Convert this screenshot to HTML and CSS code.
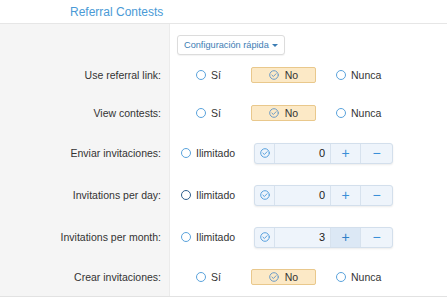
FILE: index.html
```html
<!DOCTYPE html>
<html lang="es">

<head>
    <meta charset="UTF-8">
    <meta name="viewport" content="width=device-width, initial-scale=1.0">
    <title>Referral Contests</title>
    <link rel="stylesheet" href="styles.css">
</head>

<body>
    <!-- Header -->
    <div class="page-head">
        <h2 class="title">Referral Contests</h2>
    </div>

    <div class="form">
        <!-- Quick config -->
        <div class="row row-top">
            <div class="label"></div>
            <div class="field">
                <button class="quick">Configuración rápida <span class="caret"></span></button>
            </div>
        </div>

        <div class="row">
            <div class="label">Use referral link:</div>
            <div class="field choices">
                <label class="opt opt-first"><span class="radio"></span>Sí</label>
                <span class="pick">
                    <svg class="tick" viewBox="0 0 10 10"><circle cx="5" cy="5" r="4.3"/><path d="M2.9 5.1 L4.4 6.5 L7.1 3.7"/></svg>No
                </span>
                <label class="opt"><span class="radio"></span>Nunca</label>
            </div>
        </div>

        <div class="row">
            <div class="label">View contests:</div>
            <div class="field choices">
                <label class="opt opt-first"><span class="radio"></span>Sí</label>
                <span class="pick">
                    <svg class="tick" viewBox="0 0 10 10"><circle cx="5" cy="5" r="4.3"/><path d="M2.9 5.1 L4.4 6.5 L7.1 3.7"/></svg>No
                </span>
                <label class="opt"><span class="radio"></span>Nunca</label>
            </div>
        </div>

        <div class="row row-num">
            <div class="label">Enviar invitaciones:</div>
            <div class="field limits">
                <label class="opt opt-unl"><span class="radio"></span>Ilimitado</label>
                <div class="stepper">
                    <span class="cell cell-check"><svg class="tick" viewBox="0 0 10 10"><circle cx="5" cy="5" r="4.3"/><path d="M2.9 5.1 L4.4 6.5 L7.1 3.7"/></svg></span>
                    <span class="cell cell-value">0</span>
                    <span class="cell cell-btn">+</span>
                    <span class="cell cell-btn">&minus;</span>
                </div>
            </div>
        </div>

        <div class="row row-num">
            <div class="label">Invitations per day:</div>
            <div class="field limits">
                <label class="opt opt-unl"><span class="radio radio-focus"></span>Ilimitado</label>
                <div class="stepper">
                    <span class="cell cell-check"><svg class="tick" viewBox="0 0 10 10"><circle cx="5" cy="5" r="4.3"/><path d="M2.9 5.1 L4.4 6.5 L7.1 3.7"/></svg></span>
                    <span class="cell cell-value">0</span>
                    <span class="cell cell-btn">+</span>
                    <span class="cell cell-btn">&minus;</span>
                </div>
            </div>
        </div>

        <div class="row row-num">
            <div class="label">Invitations per month:</div>
            <div class="field limits">
                <label class="opt opt-unl"><span class="radio"></span>Ilimitado</label>
                <div class="stepper">
                    <span class="cell cell-check"><svg class="tick" viewBox="0 0 10 10"><circle cx="5" cy="5" r="4.3"/><path d="M2.9 5.1 L4.4 6.5 L7.1 3.7"/></svg></span>
                    <span class="cell cell-value">3</span>
                    <span class="cell cell-btn cell-hover">+</span>
                    <span class="cell cell-btn">&minus;</span>
                </div>
            </div>
        </div>

        <div class="row">
            <div class="label">Crear invitaciones:</div>
            <div class="field choices">
                <label class="opt opt-first"><span class="radio"></span>Sí</label>
                <span class="pick">
                    <svg class="tick" viewBox="0 0 10 10"><circle cx="5" cy="5" r="4.3"/><path d="M2.9 5.1 L4.4 6.5 L7.1 3.7"/></svg>No
                </span>
                <label class="opt"><span class="radio"></span>Nunca</label>
            </div>
        </div>
    </div>
</body>

</html>
```

FILE: styles.css
```css
* {
    margin: 0;
    padding: 0;
    box-sizing: border-box;
}

body {
    background: #ffffff;
    color: #333333;
    font-family: "Liberation Sans", Arial, sans-serif;
    font-size: 10.5px;
    overflow: hidden;
}

.page-head {
    height: 24px;
    border-bottom: 1px solid #e6e6e6;
    padding-left: 70px;
    display: flex;
    align-items: center;
}

.title {
    font-size: 12px;
    font-weight: normal;
    color: #4a9ad6;
    margin-top: 1px;
}

.form {
    border-bottom: 1px solid #e2e2e2;
}

.row {
    display: flex;
    height: 38px;
}

.row-top {
    height: 32px;
}

.row-num {
    height: 42px;
}

.row-num + .row-num + .row-num {
    height: 42px;
}

.label {
    width: 170px;
    flex-shrink: 0;
    background: #f5f5f5;
    border-right: 1px solid #ebebeb;
    text-align: right;
    padding-right: 8px;
    display: flex;
    align-items: center;
    justify-content: flex-end;
}

.field {
    flex: 1;
    display: flex;
    align-items: center;
}

.row-top .field {
    align-items: flex-start;
    padding-top: 11px;
    padding-left: 7px;
}

.quick {
    height: 20px;
    padding: 0 6px;
    background: #ffffff;
    border: 1px solid #dcdcdc;
    border-radius: 3px;
    box-shadow: 0 1px 1px rgba(0, 0, 0, 0.05);
    color: #3b7db4;
    font-family: "Liberation Sans", Arial, sans-serif;
    font-size: 9.2px;
    display: flex;
    align-items: center;
    gap: 3px;
}

.caret {
    width: 0;
    height: 0;
    border-left: 3px solid transparent;
    border-right: 3px solid transparent;
    border-top: 3.5px solid #3b7db4;
}

/* radio choices */
.choices {
    padding-left: 26px;
}

.opt {
    display: flex;
    align-items: center;
    gap: 5px;
    color: #333333;
}

.opt-first {
    width: 55px;
}

.radio {
    width: 10px;
    height: 10px;
    border-radius: 50%;
    border: 1.2px solid #5aa3dc;
    background: #ffffff;
}

.radio-focus {
    border-color: #2f5f8c;
    border-width: 1.5px;
}

.pick {
    width: 65px;
    height: 16px;
    margin-right: 20px;
    background: #fce9c6;
    border: 1px solid #e9c88c;
    border-radius: 2px;
    display: flex;
    align-items: center;
    justify-content: center;
    gap: 6px;
}

.tick {
    width: 10px;
    height: 10px;
    fill: none;
    stroke: #6e9cc6;
    stroke-width: 1;
    stroke-linecap: round;
    stroke-linejoin: round;
}

/* numeric limits */
.limits {
    padding-left: 11px;
}

.opt-unl {
    width: 73px;
}

.stepper {
    display: flex;
    height: 21px;
    background: #eef4fb;
    border: 1px solid #d3dfec;
    border-radius: 3px;
    box-shadow: 0 1px 2px rgba(0, 0, 0, 0.08);
}

.cell {
    display: flex;
    align-items: center;
    justify-content: center;
    border-left: 1px solid #d7e2ee;
    font-size: 11px;
}

.cell:first-child {
    border-left: none;
}

.cell-check {
    width: 19px;
}

.cell-check .tick {
    stroke: #5aa2de;
}

.cell-value {
    width: 56px;
    justify-content: flex-end;
    padding-right: 5px;
    color: #222222;
}

.cell-btn {
    width: 30px;
    color: #3a8fd8;
    font-size: 14px;
}

.cell-btn:last-child {
    width: 32px;
}

.cell-hover {
    background: #dce8f5;
    color: #2f7fc8;
}
```
